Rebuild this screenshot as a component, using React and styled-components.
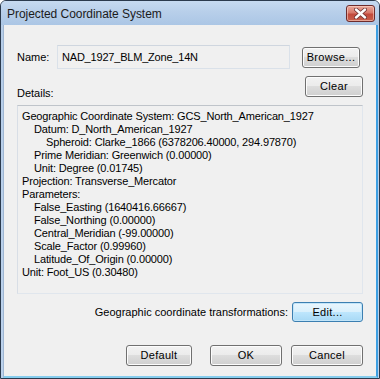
import React from "react";
import styled, { createGlobalStyle } from "styled-components";

const Global = createGlobalStyle`
  html, body { margin: 0; padding: 0; background: #ffffff; }
  body { font-family: "Liberation Sans", Arial, sans-serif; }
`;

const Window = styled.div`
  width: 380px;
  height: 379px;
  box-sizing: border-box;
  border: 1px solid #2b3a4d;
  border-radius: 6px 6px 0 0;
  background: linear-gradient(#c6d9ef, #b6cde8 30px, #bcd2ec);
  display: flex;
  flex-direction: column;
  overflow: hidden;
`;

const TitleBar = styled.div`
  height: 24px;
  flex: none;
  display: flex;
  align-items: center;
  justify-content: space-between;
  padding: 0 4px 0 6px;
  background: linear-gradient(#c6daf0, #b8cfea 45%, #abc6e5);
`;

const Title = styled.span`
  font-family: "Liberation Sans", Arial, sans-serif;
  font-size: 12px;
  letter-spacing: -0.05px;
  color: #1b1b1b;
  margin-top: 1px;
`;

const CloseButton = styled.div`
  width: 29px;
  height: 17px;
  box-sizing: border-box;
  border: 1px solid #6e2c2c;
  border-radius: 3px;
  background: linear-gradient(#eaa99a, #d8786a 45%, #c24a3c 55%, #c8604c);
  box-shadow: inset 0 0 0 1px rgba(255, 220, 210, 0.55);
  display: flex;
  align-items: center;
  justify-content: center;
  margin-top: 1px;
`;

const Body = styled.div`
  flex: 1;
  margin: 0 1px 0 2px;
  background: #f0f0f0;
  border-left: 1px solid #9fb6d2;
  border-right: 2px solid #3d9fe2;
  border-bottom: 2px solid #86cdee;
  padding: 20px 13px 0 13px;
  display: flex;
  flex-direction: column;
  font-family: "Liberation Sans", Arial, sans-serif;
  font-size: 11px;
  color: #000;
`;

const Row = styled.div`
  display: flex;
  align-items: ${(p) => p.$align || "center"};
  justify-content: ${(p) => p.$justify || "flex-start"};
  gap: ${(p) => p.$gap || 0}px;
  margin-top: ${(p) => p.$mt || 0}px;
`;

const Label = styled.span`
  line-height: 13px;
  white-space: nowrap;
  width: ${(p) => (p.$w ? p.$w + "px" : "auto")};
  margin-bottom: ${(p) => p.$mb || 0}px;
`;

const NameField = styled.div`
  width: 233px;
  height: 24px;
  box-sizing: border-box;
  border: 1px solid #dae1e9;
  border-top-color: #cfd6df;
  background: #f0f0f0;
  display: flex;
  align-items: center;
  padding-left: 4px;
  margin-right: 12px;
  letter-spacing: -0.2px;
`;

const Button = styled.div`
  width: ${(p) => p.$w}px;
  height: ${(p) => p.$h || 21}px;
  margin-left: ${(p) => p.$ml || 0}px;
  box-sizing: border-box;
  border: 1px solid ${(p) => (p.$focus ? "#3c7fb1" : "#707070")};
  border-radius: 3px;
  background: ${(p) =>
    p.$focus
      ? "linear-gradient(#eaf6fd, #d9f0fc 50%, #bee6fd 50%, #a7d9f5)"
      : "linear-gradient(#f2f2f2, #ebebeb 50%, #dddddd 50%, #cfcfcf)"};
  box-shadow: inset 0 0 0 1px ${(p) => (p.$focus ? "#c2e5f9" : "#fcfcfc")};
  display: flex;
  align-items: center;
  justify-content: center;
  line-height: 13px;
  letter-spacing: 0.3px;
  flex: none;
`;

const DetailsBox = styled.div`
  margin-top: 8px;
  height: 189px;
  box-sizing: border-box;
  border: 1px solid #e0e6ed;
  border-top-color: #bfc4ca;
  border-left-color: #d8dee6;
  padding: 4px 4px;
  line-height: 13px;
  font-size: 11px;
  letter-spacing: -0.15px;
`;

const Line = styled.div`
  padding-left: ${(p) => (p.$level || 0) * 12}px;
  white-space: nowrap;
`;

const lines = [
  [0, "Geographic Coordinate System: GCS_North_American_1927"],
  [1, "Datum: D_North_American_1927"],
  [2, "Spheroid: Clarke_1866 (6378206.40000, 294.97870)"],
  [1, "Prime Meridian: Greenwich (0.00000)"],
  [1, "Unit: Degree (0.01745)"],
  [0, "Projection: Transverse_Mercator"],
  [0, "Parameters:"],
  [1, "False_Easting (1640416.66667)"],
  [1, "False_Northing (0.00000)"],
  [1, "Central_Meridian (-99.00000)"],
  [1, "Scale_Factor (0.99960)"],
  [1, "Latitude_Of_Origin (0.00000)"],
  [0, "Unit: Foot_US (0.30480)"],
];

const CloseGlyph = () => (
  <svg width="13" height="11" viewBox="0 0 13 11">
    <path
      d="M2 1.5 L11 9.5 M11 1.5 L2 9.5"
      stroke="#6b3030"
      strokeWidth="4"
      strokeLinecap="round"
      fill="none"
    />
    <path
      d="M2 1.5 L11 9.5 M11 1.5 L2 9.5"
      stroke="#ffffff"
      strokeWidth="2.4"
      strokeLinecap="round"
      fill="none"
    />
  </svg>
);

export default function App() {
  return (
    <>
      <Global />
      <Window>
        <TitleBar>
          <Title>Projected Coordinate System</Title>
          <CloseButton>
            <CloseGlyph />
          </CloseButton>
        </TitleBar>
        <Body>
          <Row>
            <Label $w={40}>Name:</Label>
            <NameField>NAD_1927_BLM_Zone_14N</NameField>
            <Button $w={58}>Browse...</Button>
          </Row>
          <Row $align="flex-end" $justify="space-between" $mt={7}>
            <Label $mb={-3}>Details:</Label>
            <Button $w={58} $h={21}>Clear</Button>
          </Row>
          <DetailsBox>
            {lines.map(([lvl, t], i) => (
              <Line key={i} $level={lvl}>
                {t}
              </Line>
            ))}
          </DetailsBox>
          <Row $justify="flex-end" $gap={4} $mt={8}>
            <Label>Geographic coordinate transformations:</Label>
            <Button $w={71} $h={20} $focus>
              Edit...
            </Button>
          </Row>
          <Row $justify="flex-end" $gap={9} $mt={23}>
            <Button $w={66}>Default</Button>
            <Button $w={72} $ml={9}>OK</Button>
            <Button $w={72}>Cancel</Button>
          </Row>
        </Body>
      </Window>
    </>
  );
}
